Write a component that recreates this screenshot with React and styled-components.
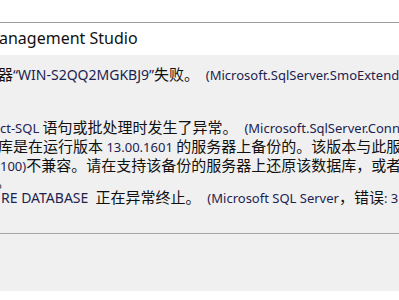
import React from "react";
import styled, { createGlobalStyle } from "styled-components";

const GlobalStyle = createGlobalStyle`
  html, body {
    margin: 0;
    padding: 0;
    background: #ffffff;
  }
  body {
    width: 399px;
    height: 300px;
    overflow: hidden;
  }
`;

const Window = styled.div`
  width: 399px;
  height: 300px;
  display: flex;
  flex-direction: column;
  background: #ffffff;
  overflow: hidden;
  font-family: "Noto Sans CJK SC", sans-serif;
`;

const TopGap = styled.div`
  height: 22px;
  flex-shrink: 0;
  border-bottom: 1px solid #9c9c9c;
`;

const TitleBar = styled.div`
  height: 30px;
  padding-bottom: 2px;
  flex-shrink: 0;
  display: flex;
  align-items: center;
  font-family: "Noto Sans", sans-serif;
  font-size: 16px;
  color: #111111;
  white-space: nowrap;
  text-indent: -1px;
`;

const Message = styled.div`
  height: 169px;
  flex-shrink: 0;
  padding-top: 9px;
  background: #f0f0f0;
  border-bottom: 1px solid #a6a6a6;
  overflow: hidden;
`;

const Line = styled.div`
  height: ${(p) => p.$h || 19}px;
  line-height: ${(p) => p.$h || 19}px;
  margin-top: ${(p) => p.$gap || 0}px;
  text-indent: ${(p) => p.$indent || 0}px;
  white-space: pre;
  font-size: 15px;
  color: #111111;
`;

const Latin = styled.span`
  font-family: "Noto Sans", sans-serif;
  font-size: ${(p) => p.$size || 13}px;
  color: #1d2350;
`;

const ButtonArea = styled.div`
  height: 57px;
  flex-shrink: 0;
  background: #f0f0f0;
`;

const BottomGap = styled.div`
  flex: 1;
  background: #ffffff;
`;

export default function App() {
  return (
    <>
      <GlobalStyle />
      <Window>
        <TopGap />
        <TitleBar>anagement Studio</TitleBar>
        <Message>
          <Line $indent={-2}>
            器<Latin $size={14}>“WIN-S2QQ2MGKBJ9”</Latin>失败。
            <Latin>  (Microsoft.SqlServer.SmoExtended)</Latin>
          </Line>
          <Line $gap={34}>
            <Latin>ct-SQL </Latin>语句或批处理时发生了异常。
            <Latin>  (Microsoft.SqlServer.ConnectionInfo)</Latin>
          </Line>
          <Line $indent={-2}>
            库是在运行版本<Latin> 13.00.1601 </Latin>的服务器上备份的。该版本与此服务器
          </Line>
          <Line>
            <Latin>100)</Latin>不兼容。请在支持该备份的服务器上还原该数据库，或者使用
          </Line>
          <Line $h={13} $indent={-4}>。</Line>
          <Line $indent={1}>
            <Latin $size={14}>RE DATABASE  </Latin>正在异常终止。
            <Latin>  (Microsoft SQL Server</Latin>，错误<Latin>: 3169)</Latin>
          </Line>
        </Message>
        <ButtonArea />
        <BottomGap />
      </Window>
    </>
  );
}
